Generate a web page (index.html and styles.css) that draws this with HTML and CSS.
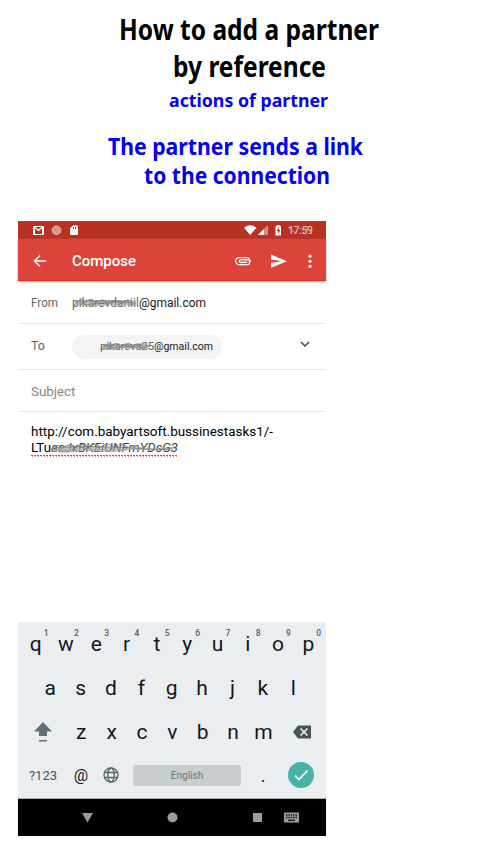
FILE: index.html
```html
<!DOCTYPE html>
<html lang="en">
<head>
<meta charset="utf-8">
<title>How to add a partner by reference</title>
<link rel="stylesheet" href="styles.css">
</head>
<body>
<header>
<svg class="headings" viewBox="0 0 500 221" width="500" height="221">
<g class="title"><text x="119" y="40" textLength="260" lengthAdjust="spacingAndGlyphs">How to add a partner</text><text x="173" y="77" textLength="153" lengthAdjust="spacingAndGlyphs">by reference</text></g>
<g class="blue"><text class="sub" x="169" y="107" textLength="159" lengthAdjust="spacingAndGlyphs">actions of partner</text>
<text class="lead" x="108" y="155" textLength="255" lengthAdjust="spacingAndGlyphs">The partner sends a link</text>
<text class="lead" x="144" y="184" textLength="186" lengthAdjust="spacingAndGlyphs">to the connection</text></g>
</svg>
</header>
<main class="phone">
<div class="status">
<svg width="308" height="18" viewBox="0 0 308 18" fill="#fff">
<path fill-rule="evenodd" d="M16 5h9q1 0 1 1v7q0 1-1 1h-9q-1 0-1-1V6q0-1 1-1zM17 7.300V13h7V7.300l-3.500 3zM17.300 6l3.200 2.500L23.700 6z"/>
<circle cx="38.500" cy="9.300" r="4.300" fill="#dc928b" stroke="#ebb8b3"/>
<path fill-rule="evenodd" d="M55 4.500h4q1 0 1 1V13q0 1-1 1h-6q-1 0-1-1V7.500zM55 6v2h1V6zM57 6v2h1V6z"/>
<path d="M226 6.700q6-4.800 12.500 0L232.200 14z"/>
<path d="M250 4v10h-10z" fill="#d88b83"/><path d="M246 8v6h-6z"/>
<path fill-rule="evenodd" d="M259 4h2.500v1h1.500v9.500h-5.500V5H259zM261 6l-2.500 4h1.500v3l2.300-4h-1.500z"/>
<text x="270" y="13" font-size="10.500" textLength="25" opacity=".8">17:59</text>
<path d="M270 6l7 6M285 5l9 6M289 5l5 8" stroke="#dc928b" fill="none"/>
</svg>
</div>
<div class="appbar">
<svg class="back" width="14" height="14" viewBox="0 0 14 14"><path d="M13 7H2M7 1.500L1.500 7 7 12.500" fill="none" stroke="#fff" stroke-width="1.500"/></svg>
<span class="compose">Compose</span>
<svg class="tools" width="80" height="18" viewBox="0 0 80 18">
<path d="M13 5.700H5.200a3.500 3.500 0 0 0 0 7h8a2.400 2.400 0 0 0 0-4.900H6.500a1.200 1.200 0 0 0 0 2.500H13M12 5.700h1a3.800 3.800 0 0 1 3.200 4.300" fill="none" stroke="#fff" stroke-width="1.200"/>
<path d="M37 2.500L53 9.200 37 15.700v-5l11-1.500-11-1.700z" fill="#fff"/>
<g fill="#fff"><circle cx="76" cy="4.300" r="1.600"/><circle cx="76" cy="9.300" r="1.600"/><circle cx="76" cy="14.300" r="1.600"/></g>
</svg>
</div>
<div class="row from"><span class="label"><svg width="30" height="22" viewBox="0 0 30 22"><text x="0" y="15" font-size="12.500" fill="#666" textLength="27" lengthAdjust="spacingAndGlyphs">From</text></svg></span>
<svg width="150" height="22" viewBox="0 0 150 22"><text x="0" y="15" font-size="12" fill="#666" textLength="67" lengthAdjust="spacingAndGlyphs">pikarevdaniil</text><text x="67" y="15" font-size="12" fill="#181818" textLength="67" lengthAdjust="spacingAndGlyphs">@gmail.com</text>
<g class="smudge"><path class="base" d="M3 12L14 8l16 1 16-1 18 2v4l-20-1-18 1-14-1-8 1z"/><path d="M2 14q5-8 9-6t-3 5q9-7 13-5t0 5q9-7 12-4t1 4q8-6 12-4t1 4q8-7 12-4t-1 4M3 10q30-3 60 1M12 13q26-4 49-2"/></g></svg></div>
<div class="row to"><span class="label">To</span>
<div class="chip"><svg width="150" height="24" viewBox="0 0 150 24"><text x="28" y="15" font-size="11" fill="#666" textLength="54" lengthAdjust="spacingAndGlyphs">pikareva25</text><text x="82" y="15" font-size="11" fill="#181818" textLength="59" lengthAdjust="spacingAndGlyphs">@gmail.com</text>
<g class="smudge"><path class="base" d="M29 14l8-5 14 1 22-2 5 3-5 3-20-1-18 2z"/><path d="M29 15q5-7 9-6t-2 4q7-6 11-4t0 4q8-6 11-4t0 4q7-6 11-3t0 3M31 11q22-2 47 0M34 14q22-4 43-1"/></g></svg></div>
<svg class="chev" width="12" height="10" viewBox="0 0 12 10"><path d="M2 2l4 4 4-4" fill="none" stroke="#444" stroke-width="1.500"/></svg></div>
<div class="row subject">Subject</div>
<div class="message">
<svg width="280" height="42" viewBox="0 0 280 42"><text x="0" y="15" textLength="242" lengthAdjust="spacingAndGlyphs">http://com.babyartsoft.bussinestasks1/-</text>
<text x="0" y="31" textLength="20" lengthAdjust="spacingAndGlyphs">LTu</text><text x="20" y="31" fill="#444" font-style="italic" textLength="127" lengthAdjust="spacingAndGlyphs">acJxBKEiUNFmYDsG3</text>
<g class="smudge"><path class="base" d="M18 30l10-4 25-2 18 2 26-1 24 2 22-1-8 4-32-1-24 2-26-1-20 2z"/><path d="M18 30q7-7 11-5t0 4q8-7 12-4t0 4q9-8 13-5t-1 5q10-8 14-5t-1 5q9-8 14-5t-1 5q10-8 14-5t0 5M20 27q42-3 81 0t43-1"/></g>
<path d="M0 34.500h147" stroke="#f33" stroke-dasharray="2 1"/><path d="M1 35.500h146" stroke="#f77" stroke-dasharray="1 2"/></svg>
</div>
<div class="keyboard">
<div class="keys top"><span>q<sup>1</sup></span><span>w<sup>2</sup></span><span>e<sup>3</sup></span><span>r<sup>4</sup></span><span>t<sup>5</sup></span><span>y<sup>6</sup></span><span>u<sup>7</sup></span><span>i<sup>8</sup></span><span>o<sup>9</sup></span><span>p<sup>0</sup></span></div>
<div class="keys home"><span>a</span><span>s</span><span>d</span><span>f</span><span>g</span><span>h</span><span>j</span><span>k</span><span>l</span></div>
<div class="keys lower">
<svg width="20" height="24" viewBox="0 0 20 24"><path d="M10 2L19 11.500h-5V16H6v-4.500H1zM6 20h8v1.500H6z" fill="#607078"/></svg>
<span>z</span><span>x</span><span>c</span><span>v</span><span>b</span><span>n</span><span>m</span>
<svg width="20" height="16" viewBox="0 0 20 16"><path d="M6 1.500h13v13H6L1 8z" fill="#45545c"/><path d="M8.500 4.500l7 7M15.500 4.500l-7 7" stroke="#eef1f3" stroke-width="1.600"/></svg>
</div>
<div class="keys bottom"><span class="sym">?123</span><span class="at">@</span>
<svg width="18" height="18" viewBox="0 0 18 18" fill="none" stroke="#56666e" stroke-width="1.300"><circle cx="9" cy="9" r="7"/><ellipse cx="9" cy="9" rx="3.200" ry="7"/><path d="M2.500 6.500h13M2.500 11.500h13"/></svg>
<span class="space">English</span><span class="dot">.</span>
<span class="done"><svg width="26" height="26" viewBox="0 0 26 26"><path d="M7 13.500l4 4 8.500-9" fill="none" stroke="#fff" stroke-width="1.600"/></svg></span></div>
</div>
<div class="nav"><svg width="308" height="37" viewBox="0 0 308 37" fill="#9b9b9b"><path d="M64 14h11l-5.500 9.500z"/><circle cx="154.500" cy="18.500" r="5"/><path d="M235 14h9v9h-9z"/><path d="M266 13.500h15v10h-15z"/><path d="M268 16h11M268 18.500h11" stroke="#111" stroke-width="1.300" stroke-dasharray="1.400 1"/><path d="M270 21.300h7" stroke="#111" stroke-width="1.300"/></svg></div>
</main>
</body>
</html>
```
FILE: styles.css
```css
body { margin: 0; background: #fff; font-family: Roboto, sans-serif; }
svg { display: block; flex: none; }
header { height: 221px; }
.headings { font-family: "Noto Sans", "Open Sans", sans-serif; font-weight: 700; }
.title { font-size: 29px; }
.blue { fill: #0000f5; }
.sub { font-size: 18px; }
.lead { font-size: 23px; }
.phone { width: 308px; margin-left: 18px; }
.status { height: 18px; background: #b93122; }
.appbar { height: 42px; box-sizing: border-box; background: #dc4439; border-bottom: 1px solid #e52c1e; box-shadow: 0 1px 2px #aaa; display: flex; align-items: center; padding: 2px 0 0 15px; color: #fff; }
.compose { margin-left: 25px; font-size: 15px; font-weight: 500; letter-spacing: 0; flex: 1; }
.tools { margin-right: 12px; }
.row { box-sizing: border-box; border-bottom: 1px solid #e9e9e9; display: flex; padding-left: 13px; font-size: 12.500px; color: #666; }
.label { width: 41px; }
.from { height: 43px; align-items: center; padding-top: 1px; }
.to { height: 46px; align-items: center; }
.to .label { padding-bottom: 2px; }
.chip { height: 24px; width: 150px; border-radius: 12px; background: #f4f4f4; }
.chev { margin: 0 0 3px 77px; }
.subject { height: 42px; align-items: center; font-size: 13.500px; letter-spacing: -.1px; color: #888; }
.message { height: 210px; box-sizing: border-box; padding: 9px 0 0 13px; font-size: 13px; }
.smudge { fill: none; stroke: #777; stroke-width: 1.100; opacity: .75; }
.base { fill: #aaa; stroke: none; }
.keyboard { height: 177px; box-sizing: border-box; background: #ebeef1; border-bottom: 1px solid #aaa; color: #10181c; }
.keys { display: grid; height: 44px; align-items: center; justify-items: center; font-size: 21px; }
.top { grid-template-columns: repeat(10, 30.300px); padding-left: 2.500px; }
.top span { position: relative; }
.top sup { position: absolute; left: calc(50% + 8px); top: -3px; font-size: 8.500px; font-weight: 500; line-height: 8px; color: #506068; }
.home { grid-template-columns: repeat(9, 30.400px); padding-left: 17px; }
.lower { grid-template-columns: 46px repeat(7, 30.400px) 46px; padding-left: 2px; }
.bottom { grid-template-columns: 46px 30px 30px 122px 30px 46px; padding-left: 2px; height: 42px; }
.sym { font-size: 13px; color: #45545c; }
.at { font-size: 16px; }
.space { width: 108px; height: 21px; border-radius: 3px; background: #c8cdd0; color: #66757c; font-size: 10px; line-height: 21px; text-align: center; }
.dot { font-size: 18px; }
.done { width: 26px; height: 26px; border-radius: 50%; background: #45b3a7; }
.nav { height: 37px; background: #000; }
```
